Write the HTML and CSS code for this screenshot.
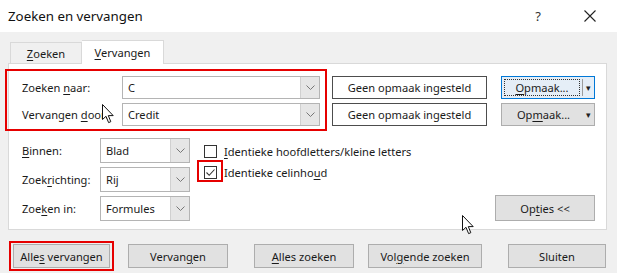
FILE: index.html
```html
<!DOCTYPE html>
<html lang="nl">
<head>
    <meta charset="UTF-8">
    <title>Zoeken en vervangen</title>
    <link rel="stylesheet" href="styles.css">
</head>
<body>
    <div class="window">
        <!-- Title bar -->
        <div class="titlebar">
            <span class="title">Zoeken en vervangen</span>
            <span class="help">?</span>
            <svg class="close" width="12" height="12" viewBox="0 0 12 12">
                <path d="M0.5 0.5 L11.5 11.5 M11.5 0.5 L0.5 11.5" stroke="#222" stroke-width="1.1" fill="none"/>
            </svg>
        </div>

        <div class="dialog">
            <!-- Tabs -->
            <div class="tabs">
                <div class="tab"><u>Z</u>oeken</div>
                <div class="tab active"><u>V</u>ervangen</div>
            </div>

            <div class="panel">
                <!-- Find / replace rows -->
                <div class="find-rows">
                    <div class="find-row">
                        <span class="label">Zoeken <u>n</u>aar:</span>
                        <div class="combo wide">
                            <span class="combo-value">C</span>
                            <span class="combo-btn"><svg width="9" height="5" viewBox="0 0 9 5"><path d="M0.5 0.5 L4.5 4.5 L8.5 0.5" stroke="#777" fill="none"/></svg></span>
                        </div>
                        <div class="format-box">Geen opmaak ingesteld</div>
                        <div class="split-btn focused">
                            <span class="split-main"><span class="focus-rect"><u>O</u>pmaak...</span></span>
                            <span class="split-sep"></span>
                            <span class="split-arrow">&#9662;</span>
                        </div>
                    </div>
                    <div class="find-row">
                        <span class="label">Vervangen <u>d</u>oor:</span>
                        <div class="combo wide">
                            <span class="combo-value">Credit</span>
                            <span class="combo-btn"><svg width="9" height="5" viewBox="0 0 9 5"><path d="M0.5 0.5 L4.5 4.5 L8.5 0.5" stroke="#777" fill="none"/></svg></span>
                        </div>
                        <div class="format-box">Geen opmaak ingesteld</div>
                        <div class="split-btn">
                            <span class="split-main"><span class="focus-rect plain">Op<u>m</u>aak...</span></span>
                            <span class="split-arrow">&#9662;</span>
                        </div>
                    </div>
                </div>

                <!-- Options -->
                <div class="options">
                    <div class="fields">
                        <span class="label"><u>B</u>innen:</span>
                        <div class="combo small">
                            <span class="combo-value">Blad</span>
                            <span class="combo-btn"><svg width="9" height="5" viewBox="0 0 9 5"><path d="M0.5 0.5 L4.5 4.5 L8.5 0.5" stroke="#777" fill="none"/></svg></span>
                        </div>
                        <span class="label">Zoek<u>r</u>ichting:</span>
                        <div class="combo small">
                            <span class="combo-value">Rij</span>
                            <span class="combo-btn"><svg width="9" height="5" viewBox="0 0 9 5"><path d="M0.5 0.5 L4.5 4.5 L8.5 0.5" stroke="#777" fill="none"/></svg></span>
                        </div>
                        <span class="label">Zoe<u>k</u>en in:</span>
                        <div class="combo small">
                            <span class="combo-value">Formules</span>
                            <span class="combo-btn"><svg width="9" height="5" viewBox="0 0 9 5"><path d="M0.5 0.5 L4.5 4.5 L8.5 0.5" stroke="#777" fill="none"/></svg></span>
                        </div>
                    </div>

                    <div class="checks">
                        <label class="check">
                            <span class="box"></span>
                            <span><u>I</u>dentieke hoofdletters/kleine letters</span>
                        </label>
                        <label class="check">
                            <span class="box"><svg width="11" height="11" viewBox="0 0 11 11"><path d="M1.5 5.5 L4.2 8.3 L9.5 2.5" stroke="#333" stroke-width="1.1" fill="none"/></svg></span>
                            <span>Identieke celinho<u>u</u>d</span>
                        </label>
                    </div>

                    <div class="opties">
                        <button class="btn opties-btn">Op<u>t</u>ies &lt;&lt;</button>
                    </div>
                </div>
            </div>

            <!-- Dialog buttons -->
            <div class="actions">
                <button class="btn b1">Alle<u>s</u> vervangen</button>
                <button class="btn b2">Vervan<u>g</u>en</button>
                <button class="btn b3"><u>A</u>lles zoeken</button>
                <button class="btn b4">Vol<u>g</u>ende zoeken</button>
                <button class="btn b5">Sluiten</button>
            </div>
        </div>

        <!-- Annotations drawn over the screenshot -->
        <div class="mark mark-find"></div>
        <div class="mark mark-check"></div>
        <div class="mark mark-all"></div>

        <svg class="cursor cursor-1" width="13" height="20" viewBox="0 0 13 20">
            <path d="M0.5 0.5 L0.5 15.5 L4 12.3 L6.6 18.6 L8.8 17.7 L6.3 11.6 L11.2 11.6 Z" fill="#fff" stroke="#111" stroke-width="1"/>
        </svg>
        <svg class="cursor cursor-2" width="13" height="20" viewBox="0 0 13 20">
            <path d="M0.5 0.5 L0.5 15.5 L4 12.3 L6.6 18.6 L8.8 17.7 L6.3 11.6 L11.2 11.6 Z" fill="#fff" stroke="#111" stroke-width="1"/>
        </svg>
    </div>
</body>
</html>
```

FILE: styles.css
```css
/* General */
body {
    margin: 0;
    font-family: "Noto Sans", "Open Sans", sans-serif;
    font-size: 11.1px;
    color: #1a1a1a;
    background: #f0f0f0;
}

u {
    text-decoration-thickness: 1px;
    text-underline-offset: 2px;
}

.window {
    position: relative;
    width: 617px;
    height: 273px;
    overflow: hidden;
    background: #f0f0f0;
}

/* Title bar */
.titlebar {
    height: 32px;
    background: #fff;
    display: flex;
    align-items: center;
    padding-left: 8px;
}

.title {
    font-size: 13.3px;
    color: #111;
    flex: 1;
}

.help {
    font-size: 13px;
    color: #333;
    margin-right: 43px;
}

.close {
    margin-right: 21px;
}

/* Dialog body */
.dialog {
    padding: 0 10px 0 8px;
}

/* Tabs */
.tabs {
    display: flex;
    align-items: flex-end;
    height: 31px;
    padding-left: 2px;
}

.tab {
    height: 20px;
    width: 70px;
    border: 1px solid #d9d9d9;
    border-bottom: none;
    background: #f0f0f0;
    text-align: center;
    line-height: 21px;
}

.tab.active {
    width: 81px;
    height: 23px;
    margin-bottom: -1px;
    background: #fff;
    border-left: none;
    position: relative;
    z-index: 1;
    line-height: 24px;
}

/* Panel */
.panel {
    background: #fff;
    border: 1px solid #d9d9d9;
    box-sizing: border-box;
    height: 167px;
    padding: 12px 0 0 13px;
}

.label {
    white-space: nowrap;
}

/* Find / replace rows */
.find-rows {
    display: flex;
    flex-direction: column;
    gap: 4px;
}

.find-row {
    display: flex;
    align-items: center;
    height: 23px;
}

.find-row .label {
    width: 100px;
}

.combo {
    display: flex;
    height: 23px;
    box-sizing: border-box;
    border: 1px solid #b4b4b4;
    background: #fff;
}

.combo.wide {
    width: 198px;
}

.combo.small {
    width: 90px;
    height: 25px;
}

.combo-value {
    flex: 1;
    padding-left: 5px;
    line-height: 21px;
}

.combo.small .combo-value {
    line-height: 23px;
}

.combo-btn {
    width: 18px;
    background: #e6e6e6;
    border-left: 1px solid #d0d0d0;
    display: flex;
    align-items: center;
    justify-content: center;
}

.format-box {
    width: 155px;
    height: 23px;
    box-sizing: border-box;
    margin-left: 12px;
    border: 1px solid #4d4d4d;
    text-align: center;
    line-height: 21px;
}

/* Split button */
.split-btn {
    display: flex;
    align-items: center;
    width: 94px;
    height: 23px;
    box-sizing: border-box;
    margin-left: 14px;
    border: 1px solid #adadad;
    background: #e1e1e1;
}

.split-btn.focused {
    border-color: #0078d7;
    background: #e5eef7;
}

.split-main {
    flex: 1;
    height: 100%;
    padding: 2px 0 2px 2px;
    box-sizing: border-box;
}

.focus-rect {
    display: block;
    height: 100%;
    box-sizing: border-box;
    border: 1px dotted #333;
    text-align: center;
    line-height: 16px;
}

.focus-rect.plain {
    border-color: transparent;
}

.split-sep {
    width: 1px;
    height: 17px;
    background: #9c9c9c;
    margin-left: 2px;
}

.split-arrow {
    width: 10px;
    text-align: center;
    font-size: 9px;
    color: #222;
    padding-right: 1px;
}

/* Options */
.options {
    display: flex;
    margin-top: 12px;
}

.fields {
    display: grid;
    grid-template-columns: 78px 90px;
    grid-auto-rows: 25px;
    row-gap: 4px;
    align-items: center;
}

.checks {
    display: flex;
    flex-direction: column;
    margin-left: 14px;
    padding-top: 3px;
}

.check {
    display: flex;
    align-items: center;
    gap: 7px;
    height: 21px;
    white-space: nowrap;
}

.box {
    width: 13px;
    height: 13px;
    box-sizing: border-box;
    border: 1px solid #333;
    background: #fff;
    display: flex;
    align-items: center;
    justify-content: center;
}

.opties {
    flex: 1;
    display: flex;
    align-items: flex-end;
    justify-content: flex-end;
    padding-right: 11px;
}

/* Buttons */
.btn {
    font-family: inherit;
    font-size: 11.1px;
    color: #1a1a1a;
    background: #e1e1e1;
    border: 1px solid #adadad;
    height: 24px;
    padding: 0;
    margin: 0;
}

.opties-btn {
    width: 100px;
    height: 26px;
}

.actions {
    display: flex;
    margin-top: 14px;
}

.b1 { width: 97px; margin-left: 5px; }
.b2 { width: 100px; margin-left: 18px; }
.b3 { width: 100px; margin-left: 26px; }
.b4 { width: 114px; margin-left: 14px; }
.b5 { width: 98px; margin-left: 26px; }

/* Red annotation boxes */
.mark {
    position: absolute;
    border: 2px solid #e60000;
    box-sizing: border-box;
}

.mark-find {
    left: 5px;
    top: 69px;
    width: 322px;
    height: 62px;
}

.mark-check {
    left: 197px;
    top: 160px;
    width: 26px;
    height: 22px;
}

.mark-all {
    left: 9px;
    top: 241px;
    width: 105px;
    height: 30px;
}

/* Mouse pointers */
.cursor {
    position: absolute;
}

.cursor-1 {
    left: 102px;
    top: 104px;
}

.cursor-2 {
    left: 462px;
    top: 215px;
}
```
